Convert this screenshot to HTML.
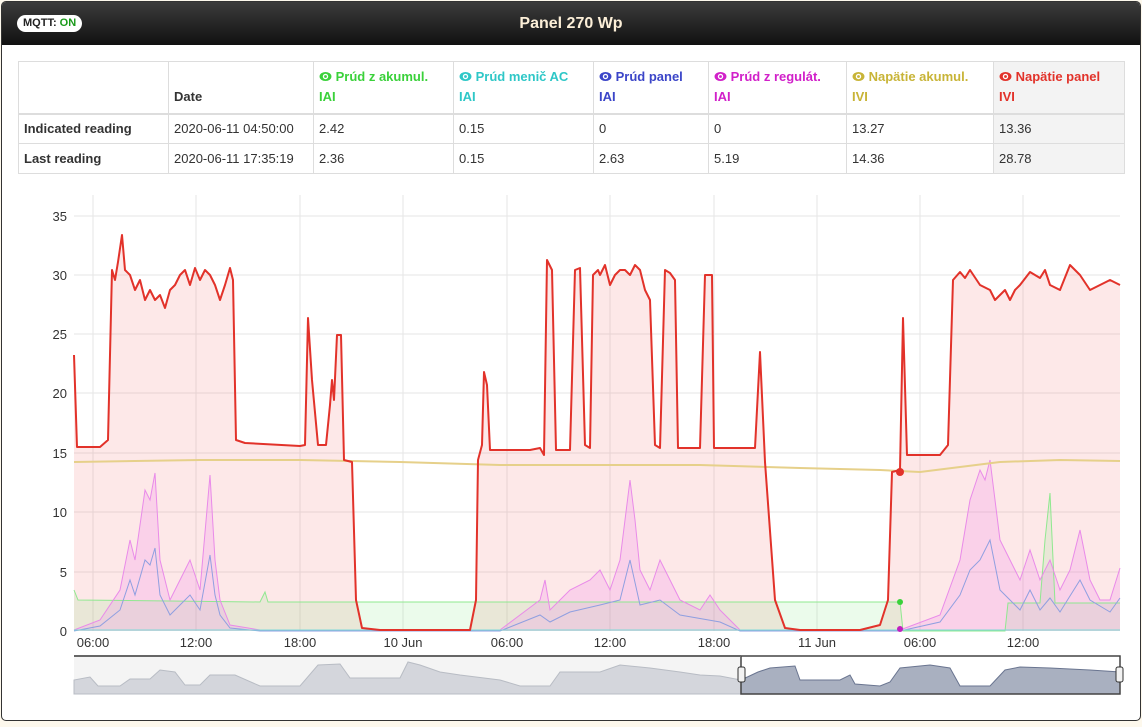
<!DOCTYPE html>
<html><head><meta charset="utf-8"><style>
body{margin:0;width:1142px;height:727px;background:#fdf8ec;font-family:"Liberation Sans",sans-serif;overflow:hidden;position:relative}
.box{position:absolute;left:1px;top:1px;width:1138px;height:718px;background:#fff;border:1px solid #333;border-radius:5px;overflow:hidden}
.hdr{height:43px;background:linear-gradient(#3c3c3c,#111);position:relative}
.hdr h1{margin:0;text-align:center;font-size:16px;line-height:43px;font-weight:bold;color:#fcefd8}
.mq{position:absolute;left:15px;top:13px;background:#fff;border-radius:9px;font-size:11px;font-weight:bold;padding:2px 6px;color:#222;line-height:13px}
.mq b{color:#1a9a1a}
table{position:absolute;left:16px;top:59px;border-collapse:collapse;font-size:13px;color:#333}
td,th{border:1px solid #ddd;padding:0 5px;text-align:left;height:30px;box-sizing:border-box}
th{vertical-align:bottom;height:52px;padding-bottom:6px;line-height:20px;border-bottom:2px solid #ddd}
.e{display:inline-block;width:13px;height:11px;vertical-align:-1px}
</style></head><body>
<div class="box">
<div class="hdr"><span class="mq">MQTT: <b>ON</b></span><h1>Panel 270 Wp</h1></div>
<table>
<tr><th style="width:150px"></th><th style="width:145px">Date</th>
<th style="width:140px;color:#3ad13a"><svg class="e" viewBox="0 0 12 10"><ellipse cx="6" cy="5" rx="5.5" ry="4.2" fill="currentColor"/><circle cx="6" cy="5" r="2.5" fill="#fff"/><circle cx="6" cy="5" r="1.3" fill="currentColor"/></svg> Prúd z akumul.<br>IAI</th>
<th style="width:140px;color:#2ec7c7"><svg class="e" viewBox="0 0 12 10"><ellipse cx="6" cy="5" rx="5.5" ry="4.2" fill="currentColor"/><circle cx="6" cy="5" r="2.5" fill="#fff"/><circle cx="6" cy="5" r="1.3" fill="currentColor"/></svg> Prúd menič AC<br>IAI</th>
<th style="width:115px;color:#3b45c8"><svg class="e" viewBox="0 0 12 10"><ellipse cx="6" cy="5" rx="5.5" ry="4.2" fill="currentColor"/><circle cx="6" cy="5" r="2.5" fill="#fff"/><circle cx="6" cy="5" r="1.3" fill="currentColor"/></svg> Prúd panel<br>IAI</th>
<th style="width:138px;color:#d120c9"><svg class="e" viewBox="0 0 12 10"><ellipse cx="6" cy="5" rx="5.5" ry="4.2" fill="currentColor"/><circle cx="6" cy="5" r="2.5" fill="#fff"/><circle cx="6" cy="5" r="1.3" fill="currentColor"/></svg> Prúd z regulát.<br>IAI</th>
<th style="width:147px;color:#c8b437"><svg class="e" viewBox="0 0 12 10"><ellipse cx="6" cy="5" rx="5.5" ry="4.2" fill="currentColor"/><circle cx="6" cy="5" r="2.5" fill="#fff"/><circle cx="6" cy="5" r="1.3" fill="currentColor"/></svg> Napätie akumul.<br>IVI</th>
<th style="width:131px;color:#e2322a;background:#f3f3f3"><svg class="e" viewBox="0 0 12 10"><ellipse cx="6" cy="5" rx="5.5" ry="4.2" fill="currentColor"/><circle cx="6" cy="5" r="2.5" fill="#fff"/><circle cx="6" cy="5" r="1.3" fill="currentColor"/></svg> Napätie panel<br>IVI</th></tr>
<tr><td><b>Indicated reading</b></td><td>2020-06-11 04:50:00</td><td>2.42</td><td>0.15</td><td>0</td><td>0</td><td>13.27</td><td style="background:#f3f3f3">13.36</td></tr>
<tr><td><b>Last reading</b></td><td>2020-06-11 17:35:19</td><td>2.36</td><td>0.15</td><td>2.63</td><td>5.19</td><td>14.36</td><td style="background:#f3f3f3">28.78</td></tr>
</table>
</div>
<svg width="1142" height="727" style="position:absolute;left:0;top:0" font-family="Liberation Sans" font-size="13" fill="#333">
<g stroke="#e6e6e6" stroke-width="1">
<line x1="74" x2="1120" y1="216" y2="216"/><line x1="74" x2="1120" y1="275" y2="275"/><line x1="74" x2="1120" y1="334" y2="334"/><line x1="74" x2="1120" y1="393" y2="393"/><line x1="74" x2="1120" y1="453" y2="453"/><line x1="74" x2="1120" y1="512" y2="512"/><line x1="74" x2="1120" y1="572" y2="572"/>
<line x1="93" x2="93" y1="195" y2="631"/><line x1="196" x2="196" y1="195" y2="631"/><line x1="300" x2="300" y1="195" y2="631"/><line x1="403" x2="403" y1="195" y2="631"/><line x1="507" x2="507" y1="195" y2="631"/><line x1="610" x2="610" y1="195" y2="631"/><line x1="714" x2="714" y1="195" y2="631"/><line x1="817" x2="817" y1="195" y2="631"/><line x1="920" x2="920" y1="195" y2="631"/><line x1="1023" x2="1023" y1="195" y2="631"/>
</g>
<g text-anchor="end" font-size="13"><text x="67" y="221">35</text><text x="67" y="280">30</text><text x="67" y="339">25</text><text x="67" y="398">20</text><text x="67" y="458">15</text><text x="67" y="517">10</text><text x="67" y="577">5</text><text x="67" y="636">0</text></g>
<g text-anchor="middle"><text x="93" y="647">06:00</text><text x="196" y="647">12:00</text><text x="300" y="647">18:00</text><text x="403" y="647">10 Jun</text><text x="507" y="647">06:00</text><text x="610" y="647">12:00</text><text x="714" y="647">18:00</text><text x="817" y="647">11 Jun</text><text x="920" y="647">06:00</text><text x="1023" y="647">12:00</text></g>
<polygon fill="rgba(240,80,80,0.13)" points="74,631 74,355 77,447 100,447 108,440 112,270 115,280 118,262 122,235 125,270 130,275 135,290 140,280 145,300 150,290 155,300 160,295 165,308 170,290 175,285 180,275 185,270 190,285 195,268 200,280 205,270 210,275 215,285 220,300 225,285 230,268 233,280 236,440 245,443 300,446 305,445 308,318 312,380 318,445 326,445 330,405 332,380 334,400 337,335 341,335 344,460 352,462 356,600 362,628 380,630 470,630 476,600 478,460 482,445 484,372 487,385 490,450 530,450 540,448 544,455 547,260 552,270 556,450 570,450 575,270 580,268 585,445 590,448 593,275 598,270 600,275 605,265 610,285 615,275 620,270 625,270 630,275 635,265 640,270 645,290 650,300 655,445 660,448 665,270 670,273 675,280 678,448 700,448 705,275 712,275 714,448 755,448 760,352 765,462 775,600 785,628 800,630 860,630 880,625 888,600 892,472 900,470 903,318 907,455 940,455 948,445 953,280 960,272 965,278 970,270 980,285 990,290 995,300 1000,295 1005,290 1010,300 1015,290 1020,285 1030,272 1040,278 1045,270 1050,285 1060,290 1070,265 1080,275 1090,290 1100,285 1110,280 1120,285 1120,631"/>
<polygon fill="rgba(120,230,120,0.15)" points="74,631 74,590 78,600 260,602 265,592 268,602 890,602 900,602 903,631 1005,631 1008,603 1040,603 1045,540 1050,493 1055,603 1120,603 1120,631"/>
<polygon fill="rgba(240,120,240,0.2)" points="74,631 74,630 100,620 120,590 130,540 135,560 145,490 150,500 155,473 160,560 170,600 180,580 190,560 200,590 210,475 215,560 220,600 230,625 260,630 500,630 540,600 545,580 550,610 570,590 590,580 600,570 610,590 620,560 630,480 635,520 640,570 650,590 660,560 670,580 680,600 700,610 710,595 720,610 740,630 900,630 940,615 960,560 970,500 980,470 985,480 990,460 1000,540 1010,560 1020,580 1030,550 1040,580 1050,560 1060,590 1070,570 1080,530 1090,580 1100,600 1110,600 1120,568 1120,631"/>
<polyline fill="none" stroke="#8fe88f" stroke-width="1" points="74,590 78,600 260,602 265,592 268,602 890,602 900,602 903,631 1005,631 1008,603 1040,603 1045,540 1050,493 1055,603 1120,603"/>
<polyline fill="none" stroke="#e98ae9" stroke-width="1" points="74,630 100,620 120,590 130,540 135,560 145,490 150,500 155,473 160,560 170,600 180,580 190,560 200,590 210,475 215,560 220,600 230,625 260,630 500,630 540,600 545,580 550,610 570,590 590,580 600,570 610,590 620,560 630,480 635,520 640,570 650,590 660,560 670,580 680,600 700,610 710,595 720,610 740,630 900,630 940,615 960,560 970,500 980,470 985,480 990,460 1000,540 1010,560 1020,580 1030,550 1040,580 1050,560 1060,590 1070,570 1080,530 1090,580 1100,600 1110,600 1120,568"/>
<polyline fill="none" stroke="#8f9fe0" stroke-width="1" points="74,631 100,626 120,610 130,580 135,595 145,560 150,565 155,548 160,595 170,615 180,605 190,595 200,610 210,555 215,595 220,615 230,628 260,631 500,631 540,615 550,622 570,612 600,605 620,600 630,560 640,605 660,600 680,615 720,622 740,631 900,631 940,622 960,595 970,570 980,560 990,540 1000,590 1010,600 1020,610 1030,590 1040,610 1050,598 1060,612 1080,580 1090,600 1110,612 1120,598"/>
<line x1="74" x2="1120" y1="630" y2="630" stroke="#7fd8d8"/>
<polyline fill="none" stroke="#e6d08a" stroke-width="2" points="74,462 200,460 300,460 400,462 500,465 600,465 700,465 800,468 880,470 920,472 960,467 1000,462 1060,460 1120,461"/>
<polyline fill="none" stroke="#e2322a" stroke-width="2" stroke-linejoin="round" points="74,355 77,447 100,447 108,440 112,270 115,280 118,262 122,235 125,270 130,275 135,290 140,280 145,300 150,290 155,300 160,295 165,308 170,290 175,285 180,275 185,270 190,285 195,268 200,280 205,270 210,275 215,285 220,300 225,285 230,268 233,280 236,440 245,443 300,446 305,445 308,318 312,380 318,445 326,445 330,405 332,380 334,400 337,335 341,335 344,460 352,462 356,600 362,628 380,630 470,630 476,600 478,460 482,445 484,372 487,385 490,450 530,450 540,448 544,455 547,260 552,270 556,450 570,450 575,270 580,268 585,445 590,448 593,275 598,270 600,275 605,265 610,285 615,275 620,270 625,270 630,275 635,265 640,270 645,290 650,300 655,445 660,448 665,270 670,273 675,280 678,448 700,448 705,275 712,275 714,448 755,448 760,352 765,462 775,600 785,628 800,630 860,630 880,625 888,600 892,472 900,470 903,318 907,455 940,455 948,445 953,280 960,272 965,278 970,270 980,285 990,290 995,300 1000,295 1005,290 1010,300 1015,290 1020,285 1030,272 1040,278 1045,270 1050,285 1060,290 1070,265 1080,275 1090,290 1100,285 1110,280 1120,285"/>
<circle cx="900" cy="472" r="4" fill="#e2322a"/><circle cx="900" cy="602" r="3" fill="#3ad13a"/><circle cx="900" cy="629" r="3" fill="#c020c0"/>
<rect x="74" y="656" width="667" height="38" fill="#f4f4f4"/>
<polygon fill="#d4d6dc" stroke="#b8bcc4" points="74,694 74,680 90,677 98,686 120,686 130,679 150,679 160,670 175,672 185,685 200,685 210,675 235,675 260,686 300,686 318,665 340,664 350,678 400,678 408,662 420,665 440,672 460,675 500,680 520,686 550,686 560,672 600,672 620,665 650,668 680,672 700,675 720,676 741,680 741,694"/>
<rect x="741" y="656" width="379" height="38" fill="#fff"/>
<polygon fill="#a9b0c0" stroke="#6a7590" points="741,694 741,680 758,672 770,668 795,666 800,680 840,680 850,675 855,684 880,686 890,682 900,668 930,665 950,668 960,686 990,686 1005,670 1020,667 1050,668 1090,670 1120,672 1120,694"/>
<rect x="741" y="656" width="379" height="38" fill="none" stroke="#444" stroke-width="1.5"/>
<line x1="74" x2="741" y1="656" y2="656" stroke="#666" stroke-width="2"/>
<rect x="738" y="667" width="7" height="15" rx="2" fill="#f2f2f2" stroke="#333"/>
<rect x="1116" y="667" width="7" height="15" rx="2" fill="#f2f2f2" stroke="#333"/>
</svg>
</body></html>
